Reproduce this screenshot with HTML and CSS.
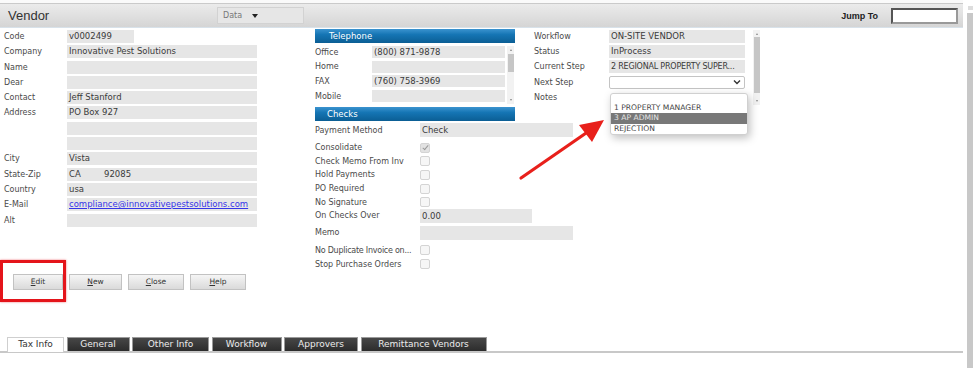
FILE: index.html
```html
<!DOCTYPE html>
<html>
<head>
<meta charset="utf-8">
<title>Vendor</title>
<link rel="stylesheet" href="styles.css">
</head>
<body>
<div class="window">

	<div class="page">
		<div class="titlebar">
			<span class="title">Vendor</span>
			<span class="view-btn">Data <i class="caret"></i></span>
			<span class="jump">Jump To</span>
			<span class="jump-box"></span>
		</div>

		<div class="content">
			<!-- vendor details -->
			<div class="col col-main">
				<div class="row"><span class="lbl">Code</span><span class="fld fld-code">v0002499</span></div>
				<div class="row"><span class="lbl">Company</span><span class="fld">Innovative Pest Solutions</span></div>
				<div class="row"><span class="lbl">Name</span><span class="fld"></span></div>
				<div class="row"><span class="lbl">Dear</span><span class="fld"></span></div>
				<div class="row"><span class="lbl">Contact</span><span class="fld">Jeff Stanford</span></div>
				<div class="row"><span class="lbl">Address</span><span class="fld">PO Box 927</span></div>
				<div class="row"><span class="lbl"></span><span class="fld"></span></div>
				<div class="row"><span class="lbl"></span><span class="fld"></span></div>
				<div class="row"><span class="lbl">City</span><span class="fld">Vista</span></div>
				<div class="row"><span class="lbl">State-Zip</span><span class="fld"><span class="state">CA</span>92085</span></div>
				<div class="row"><span class="lbl">Country</span><span class="fld">usa</span></div>
				<div class="row row-mail"><span class="lbl">E-Mail</span><span class="fld"><a href="#" class="mail">compliance@innovativepestsolutions.com</a></span></div>
				<div class="row"><span class="lbl">Alt</span><span class="fld"></span></div>
			</div>

			<!-- telephone / checks -->
			<div class="col col-mid">
				<div class="sect-head">Telephone</div>
				<div class="phone">
					<div class="phone-rows">
						<div class="prow"><span class="plbl">Office</span><span class="pfld">(800) 871-9878</span></div>
						<div class="prow"><span class="plbl">Home</span><span class="pfld"></span></div>
						<div class="prow"><span class="plbl">FAX</span><span class="pfld">(760) 758-3969</span></div>
						<div class="prow"><span class="plbl">Mobile</span><span class="pfld"></span></div>
					</div>
					<div class="mini-scroll mini-scroll-phone"><i class="up"></i><div class="mini-thumb"></div><i class="down"></i></div>
				</div>
				<div class="sect-head sect-checks">Checks</div>
				<div class="crow crow-pay"><span class="clbl">Payment Method</span><span class="cfld">Check</span></div>
				<div class="crow"><span class="clbl">Consolidate</span><span class="cbox checked"></span></div>
				<div class="crow"><span class="clbl">Check Memo From Inv</span><span class="cbox"></span></div>
				<div class="crow"><span class="clbl">Hold Payments</span><span class="cbox"></span></div>
				<div class="crow"><span class="clbl">PO Required</span><span class="cbox"></span></div>
				<div class="crow"><span class="clbl">No Signature</span><span class="cbox"></span></div>
				<div class="crow crow-field"><span class="clbl">On Checks Over</span><span class="cfld cfld-short">0.00</span></div>
				<div class="crow crow-field crow-memo"><span class="clbl">Memo</span><span class="cfld"></span></div>
				<div class="crow crow-dup"><span class="clbl">No Duplicate Invoice on...</span><span class="cbox"></span></div>
				<div class="crow"><span class="clbl">Stop Purchase Orders</span><span class="cbox"></span></div>
			</div>

			<!-- workflow -->
			<div class="col col-flow">
				<div class="flow-rows">
					<div class="frow"><span class="flbl">Workflow</span><span class="ffld">ON-SITE VENDOR</span></div>
					<div class="frow"><span class="flbl">Status</span><span class="ffld">InProcess</span></div>
					<div class="frow"><span class="flbl">Current Step</span><span class="ffld ffld-step">2 REGIONAL PROPERTY SUPER...</span></div>
					<div class="frow"><span class="flbl">Next Step</span><span class="fselect"><svg width="8" height="6" viewBox="0 0 8 6"><path d="M1 1.5 L4 4.5 L7 1.5" fill="none" stroke="#333" stroke-width="1.4"/></svg></span></div>
					<div class="frow frow-notes"><span class="flbl">Notes</span></div>
				</div>
				<div class="mini-scroll mini-scroll-flow"><i class="up"></i><div class="mini-thumb"></div><i class="down"></i></div>
			</div>
		</div>

		<div class="actions">
			<span class="btn btn-edit"><u>E</u>dit</span>
			<span class="btn btn-new"><u>N</u>ew</span>
			<span class="btn btn-close"><u>C</u>lose</span>
			<span class="btn btn-help"><u>H</u>elp</span>
		</div>

		<div class="tabs">
			<span class="tab active">Tax Info</span>
			<span class="tab tab-general">General</span>
			<span class="tab tab-other">Other Info</span>
			<span class="tab tab-flow">Workflow</span>
			<span class="tab tab-appr">Approvers</span>
			<span class="tab tab-remit">Remittance Vendors</span>
		</div>
	</div>

	<div class="page-scroll"><i class="up"></i><div class="page-thumb"></div></div>

	<!-- open select list -->
	<div class="dropdown">
		<div class="opt">1 PROPERTY MANAGER</div>
		<div class="opt sel">3 AP ADMIN</div>
		<div class="opt">REJECTION</div>
	</div>

	<!-- annotation -->
	<div class="mark-box"></div>
	<svg class="mark-arrow" width="975" height="368" viewBox="0 0 975 368">
		<line x1="521" y1="178" x2="589" y2="131" stroke="#e8201b" stroke-width="3.2" stroke-linecap="round"/>
		<polygon points="604,120 579,125 592,142" fill="#e8201b"/>
	</svg>

</div>
</body>
</html>
```

FILE: styles.css
```css
body {
	margin: 0;
	background: #fff;
	font-family: "DejaVu Sans", Verdana, sans-serif;
	font-size: 8px;
	color: #4a4a4a;
}
.window {
	position: relative;
	display: flex;
	width: 975px;
	height: 368px;
	overflow: hidden;
}
.page {
	width: 963px;
	border-top: 3px solid #fafafa;
}

/* title bar */
.titlebar {
	display: flex;
	align-items: center;
	height: 23px;
	border-top: 1px solid #cacaca;
	border-bottom: 1px solid #d8e2ea;
	background: linear-gradient(#ebebeb, #d5d5d5);
}
.title {
	width: 209px;
	padding-left: 8px;
	font-family: "Liberation Sans", Arial, sans-serif;
	font-size: 13px;
	color: #333;
}
.view-btn {
	display: flex;
	align-items: center;
	width: 80px;
	height: 15px;
	padding-left: 5px;
	border: 1px solid #d2d2d2;
	background: #e6e6e6;
	color: #777;
}
.caret {
	margin-left: 10px;
	border-left: 3px solid transparent;
	border-right: 3px solid transparent;
	border-top: 4px solid #222;
}
.jump {
	margin-left: auto;
	font-family: "Liberation Sans", Arial, sans-serif;
	font-size: 9px;
	font-weight: bold;
	color: #222;
}
.jump-box {
	width: 63px;
	height: 12px;
	margin: 0 5px 0 13px;
	border: 2px solid #555;
	border-right-color: #999;
	border-bottom-color: #999;
	background: #fff;
}

/* form columns */
.content {
	display: flex;
	height: 243px;
	margin-top: 1px;
}
.col-main {
	width: 311px;
	padding: 1px 0 0 4px;
}
.row {
	display: flex;
	align-items: center;
	height: 13px;
	margin-bottom: 2.3px;
}
.row-mail {
	margin-top: 2px;
}
.lbl {
	flex-shrink: 0;
	width: 63px;
}
.fld {
	flex-shrink: 0;
	width: 188px;
	height: 13px;
	line-height: 13px;
	padding-left: 2px;
	background: #e6e6e6;
	font-size: 8.5px;
	color: #3a3a3a;
}
.fld-code {
	width: 65px;
}
.state {
	display: inline-block;
	width: 35px;
}
.mail {
	color: #3535e8;
}

.col-mid {
	flex-shrink: 0;
	width: 200px;
	margin-right: 19px;
}
.sect-head {
	height: 14px;
	line-height: 14px;
	padding-left: 14px;
	background: linear-gradient(#3b93cf, #1575b4 40%, #0b5e94);
	color: #fff;
	font-size: 8.5px;
}
.sect-checks {
	padding-left: 12px;
}
.phone {
	display: flex;
	height: 61px;
	padding-top: 3px;
}
.phone-rows {
	width: 192px;
}
.prow {
	display: flex;
	align-items: center;
	height: 12px;
	margin-bottom: 2.7px;
}
.plbl {
	flex-shrink: 0;
	width: 57px;
}
.pfld {
	flex-shrink: 0;
	width: 131px;
	height: 12px;
	line-height: 12px;
	padding-left: 2px;
	background: #e6e6e6;
	font-size: 8.5px;
	color: #3a3a3a;
}

.mini-scroll {
	display: flex;
	flex-direction: column;
	align-items: center;
	width: 7px;
	background: #f2f2f2;
}
.mini-scroll-phone {
	height: 58px;
}
.mini-scroll-phone .mini-thumb {
	height: 18px;
	margin-top: 3px;
}
.mini-scroll-flow {
	height: 75px;
	margin-left: 8px;
}
.mini-scroll-flow .mini-thumb {
	height: 56px;
	margin-top: 2px;
}
.mini-thumb {
	width: 6px;
	background: #c6c6c6;
}
.mini-scroll .up,
.mini-scroll .down {
	margin-top: 3px;
	border-left: 1.5px solid transparent;
	border-right: 1.5px solid transparent;
	border-bottom: 2px solid #888;
}
.mini-scroll .down {
	margin-top: auto;
	margin-bottom: 3px;
	border-bottom: 0;
	border-top: 2px solid #888;
}

.crow {
	display: flex;
	align-items: center;
	height: 13.6px;
}
.crow-pay {
	height: 14px;
	margin: 2px 0 4px;
}
.crow-field {
	height: 14px;
}
.crow-memo {
	margin: 3px 0 3px;
}
.crow-dup {
	height: 14.4px;
}
.clbl {
	flex-shrink: 0;
	width: 105px;
	white-space: nowrap;
}
.crow-dup .clbl {
	letter-spacing: -0.25px;
}
.cfld {
	flex-shrink: 0;
	width: 151px;
	height: 14px;
	line-height: 14px;
	padding-left: 2px;
	background: #e6e6e6;
	font-size: 8.5px;
	color: #3a3a3a;
}
.cfld-short {
	width: 110px;
}
.cbox {
	flex-shrink: 0;
	box-sizing: border-box;
	width: 10px;
	height: 10px;
	border: 1px solid #d4d4d4;
	border-radius: 2px;
	background: #f6f6f6;
}
.cbox.checked {
	position: relative;
	background: #e2e2e2;
}
.cbox.checked:after {
	content: "";
	position: absolute;
	left: 2.5px;
	top: 0.5px;
	width: 2px;
	height: 5px;
	border-right: 1.3px solid #999;
	border-bottom: 1.3px solid #999;
	transform: rotate(40deg);
}

.col-flow {
	display: flex;
	align-items: flex-start;
	padding-top: 1px;
}
.flow-rows {
	width: 211px;
}
.frow {
	display: flex;
	align-items: center;
	height: 13px;
	margin-bottom: 2.2px;
}
.flbl {
	flex-shrink: 0;
	width: 75px;
}
.ffld {
	flex-shrink: 0;
	width: 134px;
	height: 13px;
	line-height: 13px;
	padding-left: 2px;
	background: #e6e6e6;
	font-size: 8.5px;
	color: #3a3a3a;
	white-space: nowrap;
	overflow: hidden;
}
.ffld-step {
	font-size: 8px;
	letter-spacing: -0.2px;
}
.fselect {
	display: flex;
	align-items: center;
	justify-content: flex-end;
	box-sizing: border-box;
	width: 136px;
	height: 13px;
	padding-right: 3px;
	border: 1px solid #c4c4c4;
	border-radius: 2px;
	background: #fff;
}
.frow-notes {
	margin-top: 2px;
}

/* buttons */
.actions {
	display: flex;
	gap: 6px;
	margin-top: 2px;
	padding-left: 13px;
}
.btn {
	box-sizing: border-box;
	height: 16px;
	line-height: 14px;
	text-align: center;
	border: 1px solid #c2c2c2;
	background: linear-gradient(#f5f5f5, #dadada);
	color: #333;
	font-size: 7.5px;
}
.btn-edit { width: 50px; }
.btn-new { width: 53px; }
.btn-close { width: 56px; }
.btn-help { width: 56px; }

/* tabs */
.tabs {
	display: flex;
	gap: 2.5px;
	height: 14px;
	margin-top: 47px;
	padding-left: 7px;
	border-bottom: 2px solid #c8c8c8;
}
.tab {
	box-sizing: border-box;
	height: 14px;
	line-height: 13px;
	text-align: center;
	border: 1px solid #9a9a9a;
	border-bottom: 0;
	background: linear-gradient(#474747, #2c2c2c);
	color: #ececec;
	font-size: 9px;
}
.tab.active {
	width: 57px;
	height: 15px;
	border-color: #cfcfcf;
	background: #fff;
	color: #333;
}
.tab-general { width: 63px; }
.tab-other { width: 77px; }
.tab-flow { width: 70px; }
.tab-appr { width: 74px; }
.tab-remit { width: 126px; }

/* window scrollbar */
.page-scroll {
	display: flex;
	flex-direction: column;
	align-items: center;
	width: 10px;
	margin-left: 2px;
	padding-top: 6px;
	background: #fff;
}
.page-scroll .up {
	width: 5px;
	height: 4px;
	margin-bottom: 3px;
	background: #ddd;
}
.page-scroll .page-thumb {
	flex: 1;
	width: 6px;
	background: #c8c8c8;
}

/* overlays */
.dropdown {
	position: absolute;
	left: 610px;
	top: 93px;
	width: 136px;
	padding-top: 9px;
	border: 1px solid #d0d0d0;
	border-radius: 3px;
	background: #fff;
	box-shadow: 2px 3px 8px rgba(0, 0, 0, .25);
	font-size: 7.6px;
	color: #444;
}
.opt {
	height: 10.3px;
	line-height: 10.3px;
	padding-left: 3px;
}
.opt.sel {
	background: #787878;
	color: #e4e4e4;
}
.mark-box {
	position: absolute;
	left: 0;
	top: 260px;
	width: 60px;
	height: 36px;
	border: 3px solid #e4141a;
	box-shadow: 0 0 2px rgba(228, 20, 26, .6);
}
.mark-arrow {
	position: absolute;
	left: 0;
	top: 0;
	pointer-events: none;
}
```
